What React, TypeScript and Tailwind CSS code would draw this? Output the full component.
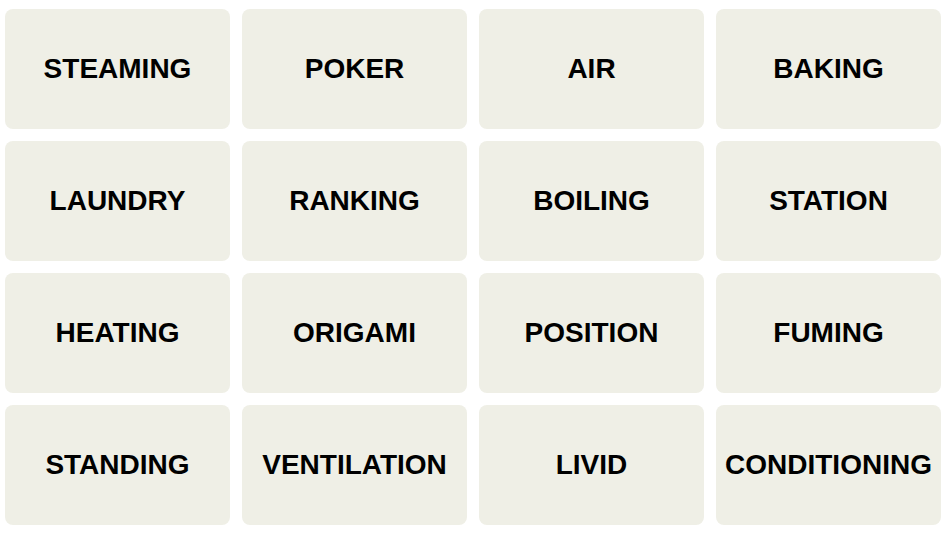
import React from 'react';

const WORDS = [
  'STEAMING', 'POKER', 'AIR', 'BAKING',
  'LAUNDRY', 'RANKING', 'BOILING', 'STATION',
  'HEATING', 'ORIGAMI', 'POSITION', 'FUMING',
  'STANDING', 'VENTILATION', 'LIVID', 'CONDITIONING',
];

export default function App() {
  return (
    <div className="min-h-screen bg-white pl-[5px] pt-[9px]" style={{ fontFamily: '"Liberation Sans", Arial, sans-serif' }}>
      <div className="grid grid-cols-[repeat(4,225px)] grid-rows-[repeat(4,120px)] gap-3">
        {WORDS.map((w) => (
          <button
            key={w}
            className="flex items-center justify-center rounded-lg bg-[#efefe6] text-[28px] font-bold uppercase text-black"
          >
            {w}
          </button>
        ))}
      </div>
    </div>
  );
}
